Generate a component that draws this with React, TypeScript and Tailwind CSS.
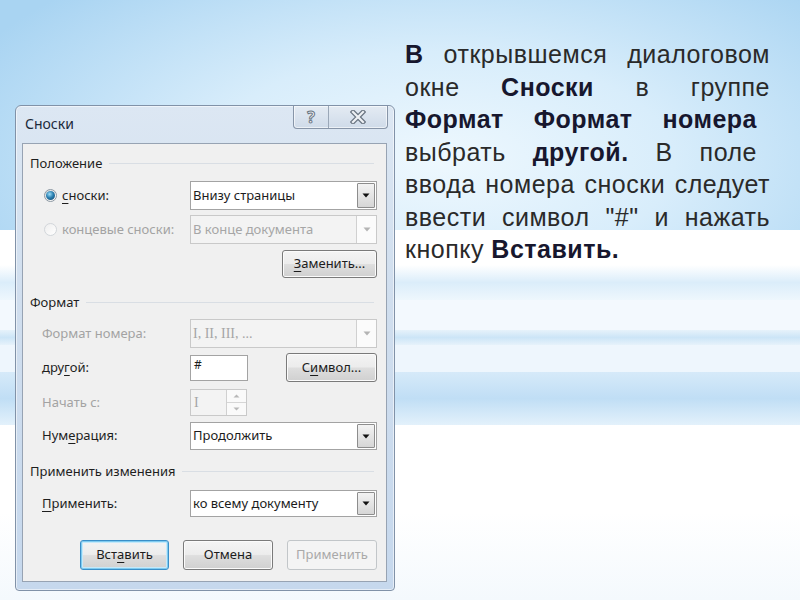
import React from 'react';

const dlgFont = "font-['Noto_Sans','Open_Sans',sans-serif]";

function Arrow({ disabled }: { disabled?: boolean }) {
  return (
    <svg width="8" height="5" viewBox="0 0 8 5">
      <path d="M0.5 0.5 L7.5 0.5 L4 4.5 Z" fill={disabled ? '#b4b4b4' : '#111'} />
    </svg>
  );
}

function Combo({
  children,
  disabled,
  serif,
  h,
}: {
  children: React.ReactNode;
  disabled?: boolean;
  serif?: boolean;
  h: string;
}) {
  return (
    <div
      className={`flex w-[187px] ${h} border ${
        disabled ? 'border-[#c9c9c9] bg-[#f3f3f3]' : 'border-[#a3a3a3] bg-white'
      }`}
    >
      <div
        className={`flex flex-1 items-center pl-[2px] text-[13px] ${
          serif ? "font-['Liberation_Serif','DejaVu_Serif',serif] text-[14px]" : ''
        } ${disabled ? 'text-[#a6a6a6]' : 'text-[#1c1c1c]'}`}
      >
        {children}
      </div>
      {disabled ? (
        <div className="flex w-[20px] items-center justify-center border-l border-[#d0d0d0] bg-[#fbfbfb]">
          <Arrow disabled />
        </div>
      ) : (
        <div className="m-px flex w-[18px] items-center justify-center rounded-[1px] border border-[#8d8d8d] bg-gradient-to-b from-[#f3f3f3] to-[#d6d6d6]">
          <Arrow />
        </div>
      )}
    </div>
  );
}

function Btn({
  children,
  w,
  h,
  disabled,
  def,
}: {
  children: React.ReactNode;
  w: string;
  h: string;
  disabled?: boolean;
  def?: boolean;
}) {
  if (disabled) {
    return (
      <div
        className={`flex ${w} ${h} items-center justify-center rounded-[3px] border border-[#c2c6c9] bg-[#f4f4f4] text-[13px] text-[#a9a9a9]`}
      >
        {children}
      </div>
    );
  }
  return (
    <div
      className={`flex ${w} ${h} items-center justify-center rounded-[3px] border ${
        def
          ? 'border-[#3a8fc8] shadow-[inset_0_0_0_1px_#7fcbf0,inset_0_0_0_2px_#c6e9fa]'
          : 'border-[#7a7a7a] shadow-[inset_0_0_0_1px_#fbfbfb]'
      } bg-[linear-gradient(to_bottom,#f4f4f4_0%,#ececec_48%,#dedede_52%,#d0d0d0_100%)] text-[13px] text-[#1c1c1c]`}
    >
      {children}
    </div>
  );
}

function U({ children }: { children: React.ReactNode }) {
  return <span className="underline decoration-1 underline-offset-[3px]">{children}</span>;
}

function Header({ children, mt }: { children: React.ReactNode; mt: string }) {
  return (
    <div className={`flex h-[18px] items-center ${mt}`}>
      <span className="text-[13px] leading-[18px] text-[#1e1e1e]">{children}</span>
      <div className="ml-[7px] mr-[3px] h-px flex-1 bg-[#d9dee4]" />
    </div>
  );
}

function Label({ children, gray, pl = 'pl-[12px]' }: { children: React.ReactNode; gray?: boolean; pl?: string }) {
  return (
    <div
      className={`flex w-[160px] items-center ${pl} text-[13px] ${gray ? 'text-[#a3a3a3]' : 'text-[#1e1e1e]'}`}
    >
      {children}
    </div>
  );
}

function Radio({ checked }: { checked?: boolean }) {
  return checked ? (
    <div className="flex h-[13px] w-[13px] items-center justify-center rounded-full border border-[#8c98a3] bg-gradient-to-br from-[#dcdcdc] to-white">
      <div className="h-[9px] w-[9px] rounded-full bg-[radial-gradient(circle_at_40%_35%,#9fe0fa_0%,#2a7fb0_45%,#0f3f66_100%)]" />
    </div>
  ) : (
    <div className="h-[13px] w-[13px] rounded-full border border-[#d2d6da] bg-gradient-to-br from-[#eeeeee] to-white" />
  );
}

function Dialog() {
  return (
    <div
      className={`flex h-[486px] w-[380px] flex-col rounded-t-[6px] rounded-b-[4px] border border-[#8192a8] bg-[linear-gradient(to_bottom,#dce7f3_0%,#d0deee_40%,#c6d8ed_100%)] shadow-[inset_0_0_0_1px_rgba(255,255,255,0.55)] ${dlgFont}`}
    >
      <div className="flex h-[37px] items-start justify-between">
        <div className="pl-[9px] pt-[8px] text-[14px] leading-[20px] text-[#1c2a3b]">Сноски</div>
        <div className="mr-[6px] flex h-[23px] rounded-b-[4px] border border-t-0 border-[#8795a8] bg-gradient-to-b from-[#e4ebf3] to-[#cfdbe9] shadow-[inset_0_0_0_1px_rgba(255,255,255,0.6)]">
          <div className="flex w-[35px] items-center justify-center border-r border-[#9aa7b7]">
            <span className="text-[16px] font-bold leading-none text-[#eef1f4] [-webkit-text-stroke:1px_#6a7582]">?</span>
          </div>
          <div className="flex w-[58px] items-center justify-center">
            <svg width="16" height="14" viewBox="0 0 16 14">
              <path d="M3 2 L13 12 M13 2 L3 12" stroke="#6a7582" strokeWidth="4.6" strokeLinecap="square" />
              <path d="M3 2 L13 12 M13 2 L3 12" stroke="#eef1f4" strokeWidth="2.2" strokeLinecap="square" />
            </svg>
          </div>
        </div>
      </div>
      <div className="mb-[8px] ml-[6px] mr-[7px] flex flex-1 flex-col border border-[#97a3b3] bg-[#f0f0f0] pl-[7px] pr-[9px]">
        <Header mt="mt-[10px]">Положение</Header>

        <div className="mt-[9px] flex h-[29px]">
          <Label pl="pl-[14px]">
            <Radio checked />
            <span className="ml-[5px]">
              <U>с</U>носки:
            </span>
          </Label>
          <Combo h="h-[29px]">Внизу страницы</Combo>
        </div>

        <div className="mt-[5px] flex h-[29px]">
          <Label gray pl="pl-[14px]">
            <Radio />
            <span className="ml-[5px]">концевые сноски:</span>
          </Label>
          <Combo h="h-[29px]" disabled>
            В конце документа
          </Combo>
        </div>

        <div className="mt-[6px] flex h-[28px] justify-end">
          <Btn w="w-[95px]" h="h-[28px]">
            <U>З</U>аменить...
          </Btn>
        </div>

        <Header mt="mt-[15px]">Формат</Header>

        <div className="mt-[8px] flex h-[29px]">
          <Label gray>Формат номера:</Label>
          <Combo h="h-[29px]" disabled serif>
            I, II, III, ...
          </Combo>
        </div>

        <div className="mt-[5px] flex h-[29px] items-center">
          <Label>
            дру<U>г</U>ой:
          </Label>
          <div className="flex h-[26px] w-[58px] items-start border border-[#a3a3a3] bg-white pl-[3px] pt-[2px] text-[12px] leading-[14px] text-[#1c1c1c]">
            #
          </div>
          <div className="flex-1" />
          <Btn w="w-[91px]" h="h-[29px]">
            С<U>и</U>мвол...
          </Btn>
        </div>

        <div className="mt-[7px] flex h-[27px]">
          <Label gray>Начать с:</Label>
          <div className="flex h-[27px] w-[57px] border border-[#c9c9c9] bg-[#f3f3f3]">
            <div className="flex flex-1 items-center pl-[3px] font-['Liberation_Serif','DejaVu_Serif',serif] text-[14px] text-[#a6a6a6]">
              I
            </div>
            <div className="flex w-[20px] flex-col border-l border-[#d0d0d0] bg-[#fafafa]">
              <div className="flex flex-1 items-center justify-center border-b border-[#d6d6d6]">
                <svg width="7" height="4" viewBox="0 0 7 4">
                  <path d="M0.5 3.5 L6.5 3.5 L3.5 0.5 Z" fill="#b8b8b8" />
                </svg>
              </div>
              <div className="flex flex-1 items-center justify-center">
                <svg width="7" height="4" viewBox="0 0 7 4">
                  <path d="M0.5 0.5 L6.5 0.5 L3.5 3.5 Z" fill="#b8b8b8" />
                </svg>
              </div>
            </div>
          </div>
        </div>

        <div className="mt-[6px] flex h-[28px]">
          <Label>
            Нум<U>е</U>рация:
          </Label>
          <Combo h="h-[28px]">Продолжить</Combo>
        </div>

        <Header mt="mt-[12px]">Применить изменения</Header>

        <div className="mt-[10px] flex h-[27px]">
          <Label>
            <span>
              <U>П</U>рименить:
            </span>
          </Label>
          <Combo h="h-[27px]">ко всему документу</Combo>
        </div>

        <div className="mt-[23px] flex h-[30px] justify-end gap-[14px]">
          <Btn w="w-[89px]" h="h-[30px]" def>
            Вст<U>а</U>вить
          </Btn>
          <Btn w="w-[90px]" h="h-[30px]">
            Отмена
          </Btn>
          <Btn w="w-[90px]" h="h-[30px]" disabled>
            Применить
          </Btn>
        </div>
      </div>
    </div>
  );
}

function Line({ children, last, w = 'w-[365px]' }: { children: React.ReactNode; last?: boolean; w?: string }) {
  return (
    <div className={`${w} whitespace-nowrap ${last ? 'text-left' : 'text-justify [text-align-last:justify]'}`}>
      {children}
    </div>
  );
}

function B({ children }: { children: React.ReactNode }) {
  return <span className="font-bold text-[#17172e]">{children}</span>;
}

export default function App() {
  return (
    <div className="relative h-[600px] w-[800px] overflow-hidden bg-white">
      <div className="absolute inset-0 flex flex-col">
        <div className="h-[230px] bg-[radial-gradient(ellipse_65%_105%_at_55%_70%,#eef8fe_0%,#d8edfb_45%,#a9d4f2_100%)]" />
        <div className="h-[35px] bg-white" />
        <div className="h-[35px] bg-gradient-to-b from-white via-[#dbedfa] to-[#eef7fd]" />
        <div className="h-[30px] bg-[#f3f9fe]" />
        <div className="h-[15px] bg-gradient-to-b from-[#e6f2fb] via-[#cce5f7] to-[#e6f2fb]" />
        <div className="h-[27px] bg-[#eef6fd]" />
        <div className="h-[53px] bg-gradient-to-b from-[#d6eaf9] via-[#c0def5] to-[#e3f1fb]" />
        <div className="flex-1 bg-gradient-to-b from-white via-white to-[#f4f9fd]" />
      </div>

      <div className="relative flex items-start">
        <div className="pl-[15px] pt-[105px]">
          <Dialog />
        </div>
        <div className="ml-[10px] pt-[38px] font-['Liberation_Sans',Arial,sans-serif] text-[25px] leading-[32.5px] tracking-[0.5px] text-[#2a2a2a]">
          <Line>
            <B>В</B> открывшемся диалоговом
          </Line>
          <Line>
            окне <B>Сноски</B> в группе
          </Line>
          <Line w="w-[352px]">
            <B>Формат Формат номера</B>
          </Line>
          <Line w="w-[352px]">
            выбрать <B>другой.</B> В поле
          </Line>
          <Line>ввода номера сноски следует</Line>
          <Line>ввести символ "#" и нажать</Line>
          <Line last>
            кнопку <B>Вставить.</B>
          </Line>
        </div>
      </div>
    </div>
  );
}
